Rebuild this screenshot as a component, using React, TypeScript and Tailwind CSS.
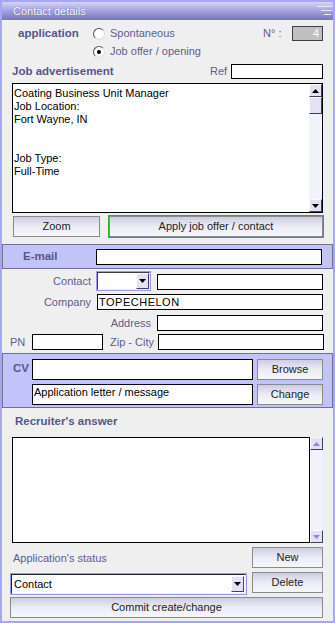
import React from 'react';

const font = { fontFamily: '"Liberation Sans", Arial, sans-serif' };

function Btn({ label, className = '' }: { label: string; className?: string }) {
  return (
    <div
      className={`flex items-center justify-center border border-[#8a8a8a] bg-gradient-to-b from-[#cdcde2] via-[#ececf6] to-[#f6f6fc] text-[11px] text-[#222] ${className}`}
    >
      {label}
    </div>
  );
}

function Radio({ checked }: { checked?: boolean }) {
  return (
    <div className="relative w-[12px] h-[12px] rounded-full bg-white border border-t-[#555] border-l-[#555] border-r-[#ddd] border-b-[#ddd] shrink-0">
      {checked && <div className="absolute left-[3px] top-[3px] w-[4px] h-[4px] rounded-full bg-black" />}
    </div>
  );
}

function Arrow({ up, light }: { up?: boolean; light?: boolean }) {
  const c = light ? '#8a8ac8' : '#000';
  return (
    <svg width="7" height="4" viewBox="0 0 7 4">
      {up ? <path d="M3.5 0 L7 4 L0 4 Z" fill={c} /> : <path d="M0 0 L7 0 L3.5 4 Z" fill={c} />}
    </svg>
  );
}

function ScrollBtn({ up, light }: { up?: boolean; light?: boolean }) {
  return (
    <div className="w-[13px] h-[13px] flex items-center justify-center bg-[#e2e2f4] border border-t-[#fafaff] border-l-[#fafaff] border-r-[#404060] border-b-[#404060]">
      <Arrow up={up} light={light} />
    </div>
  );
}

function Input({ className = '', value }: { className?: string; value?: string }) {
  return (
    <div className={`bg-white border border-black text-[11px] leading-[14px] pl-[1px] text-black overflow-hidden whitespace-nowrap ${className}`}>
      {value}
    </div>
  );
}

const label = 'text-[11px] text-[#5d5d8d]';
const head = 'text-[11.5px] font-bold text-[#56568a]';

export default function App() {
  return (
    <div style={font} className="w-[335px] h-[623px] border-2 border-[#a6a6f4] bg-[#efefef] flex flex-col overflow-hidden">
      {/* Title bar */}
      <div className="h-[18px] shrink-0 flex items-center justify-between bg-gradient-to-b from-[#d4d4f6] via-[#a2a2dc] to-[#7676bc] pl-[11px] pr-[1px]">
        <span className="text-[11px] text-white [text-shadow:0_0_1px_#44447a]">Contact details</span>
        <svg width="15" height="13" viewBox="0 0 15 13">
          <rect x="0" y="1" width="15" height="1" fill="#e8e8ff" />
          <rect x="4" y="5" width="11" height="1" fill="#e8e8ff" />
          <rect x="7" y="9" width="7" height="1" fill="#e8e8ff" />
        </svg>
      </div>

      {/* Application */}
      <div className="mt-[6px] h-[15px] flex items-center pl-[16px] pr-[10px]">
        <span className={`${head} w-[75px]`}>application</span>
        <Radio />
        <span className={`${label} ml-[5px]`}>Spontaneous</span>
        <div className="flex-1" />
        <span className={`${label} w-[29px]`}>N° :</span>
        <div className="w-[31px] h-[15px] bg-[#c0c0c0] border border-[#404040] text-[11px] text-white text-right pr-[3px] leading-[13px]">4</div>
      </div>
      <div className="mt-[3px] h-[15px] flex items-center pl-[91px]">
        <Radio checked />
        <span className={`${label} ml-[5px]`}>Job offer / opening</span>
      </div>

      {/* Job advertisement */}
      <div className="mt-[5px] h-[15px] flex items-center pl-[10px] pr-[10px]">
        <span className={head}>Job advertisement</span>
        <div className="flex-1" />
        <span className={`${label} w-[21px]`}>Ref</span>
        <Input className="w-[92px] h-[15px]" />
      </div>
      <div className="mt-[4px] ml-[10px] w-[311px] h-[130px] bg-white border border-black flex">
        <div className="flex-1 pl-[1px] pt-[3px] text-[11px] leading-[13px] text-black">
          <div>Coating Business Unit Manager</div>
          <div>Job Location:</div>
          <div>Fort Wayne, IN</div>
          <div className="h-[13px]" />
          <div className="h-[13px]" />
          <div>Job Type:</div>
          <div>Full-Time</div>
        </div>
        <div className="w-[13px] flex flex-col bg-[#f2f2fa]">
          <ScrollBtn up />
          <div className="h-[17px] bg-[#e2e2f4] border border-t-[#fafaff] border-l-[#fafaff] border-r-[#404060] border-b-[#404060]" />
          <div className="flex-1" />
          <ScrollBtn />
        </div>
      </div>
      <div className="mt-[2px] h-[23px] flex items-center pl-[11px]">
        <Btn label="Zoom" className="w-[87px] h-[21px]" />
        <div className="ml-[8px] border border-[#22b422] p-0">
          <Btn label="Apply job offer / contact" className="w-[214px] h-[21px]" />
        </div>
      </div>

      {/* E-mail */}
      <div className="mt-[6px] h-[25px] bg-[#c3c3fc] border border-[#707092] flex items-center">
        <span className={`${head} ml-[20px] w-[73px]`}>E-mail</span>
        <Input className="w-[226px] h-[16px]" />
      </div>

      {/* Contact */}
      <div className="h-[84px] flex flex-col">
        <div className="mt-[3px] h-[18px] flex items-center">
          <span className={`${label} w-[89px] text-right`}>Contact</span>
          <div className="ml-[6px] w-[53px] h-[18px] bg-white border border-t-[#404040] border-l-[#404040] border-r-[#e8e8ff] border-b-[#e8e8ff] outline outline-1 outline-[#9a9ae8] flex justify-end">
            <div className="w-[13px] h-full flex items-center justify-center bg-[#e2e2f4] border border-t-[#fafaff] border-l-[#fafaff] border-r-[#404060] border-b-[#404060]">
              <Arrow />
            </div>
          </div>
          <Input className="ml-[7px] w-[166px] h-[16px] mt-[2px]" />
        </div>
        <div className="mt-[4px] h-[16px] flex items-center">
          <span className={`${label} w-[89px] text-right`}>Company</span>
          <Input className="ml-[6px] w-[226px] h-[16px] tracking-[0.5px]" value="TOPECHELON" />
        </div>
        <div className="mt-[5px] h-[16px] flex items-center">
          <span className={`${label} w-[149px] text-right`}>Address</span>
          <Input className="ml-[6px] w-[166px] h-[16px]" />
        </div>
        <div className="mt-[3px] h-[16px] flex items-center">
          <span className={`${label} ml-[8px] w-[22px]`}>PN</span>
          <Input className="w-[71px] h-[16px]" />
          <span className={`${label} ml-[7px] w-[48px]`}>Zip - City</span>
          <Input className="w-[166px] h-[16px]" />
        </div>
      </div>

      {/* CV */}
      <div className="h-[55px] bg-[#c3c3fc] border border-[#707092] flex flex-col">
        <div className="mt-[5px] h-[21px] flex items-center">
          <span className={`${head} ml-[10px] w-[19px] mb-[2px]`}>CV</span>
          <Input className="w-[221px] h-[21px]" />
          <Btn label="Browse" className="ml-[4px] w-[66px] h-[21px]" />
        </div>
        <div className="mt-[4px] h-[21px] flex items-center pl-[29px]">
          <Input className="w-[221px] h-[21px] leading-[15px]" value="Application letter / message" />
          <Btn label="Change" className="ml-[4px] w-[66px] h-[21px]" />
        </div>
      </div>

      {/* Recruiter's answer */}
      <div className="flex-1 flex flex-col">
        <span className={`${head} ml-[13px] mt-[6px] h-[15px] leading-[15px]`}>Recruiter's answer</span>
        <div className="mt-[8px] ml-[10px] w-[311px] h-[106px] flex">
          <div className="flex-1 bg-white border border-black" />
          <div className="w-[13px] flex flex-col justify-between bg-[#f2f2fa]">
            <ScrollBtn up light />
            <ScrollBtn light />
          </div>
        </div>
        <div className="mt-[4px] h-[21px] flex items-end pr-[10px]">
          <span className={`${label} ml-[11px] mb-[2px]`}>Application's status</span>
          <div className="flex-1" />
          <Btn label="New" className="w-[71px] h-[21px]" />
        </div>
        <div className="mt-[4px] h-[21px] flex items-center pr-[10px]">
          <div className="ml-[9px] w-[235px] h-[20px] mt-[3px] bg-white border border-t-[#222] border-l-[#222] border-r-[#e8e8ff] border-b-[#e8e8ff] outline outline-1 outline-[#9a9ae8] flex items-center">
            <span className="flex-1 text-[11px] text-black pl-[2px]">Contact</span>
            <div className="w-[13px] h-[16px] mr-[1px] flex items-center justify-center bg-[#e2e2f4] border border-t-[#fafaff] border-l-[#fafaff] border-r-[#404060] border-b-[#404060]">
              <Arrow />
            </div>
          </div>
          <div className="flex-1" />
          <Btn label="Delete" className="w-[71px] h-[21px]" />
        </div>
        <Btn label="Commit create/change" className="mt-[4px] ml-[8px] w-[313px] h-[21px]" />
      </div>
    </div>
  );
}
